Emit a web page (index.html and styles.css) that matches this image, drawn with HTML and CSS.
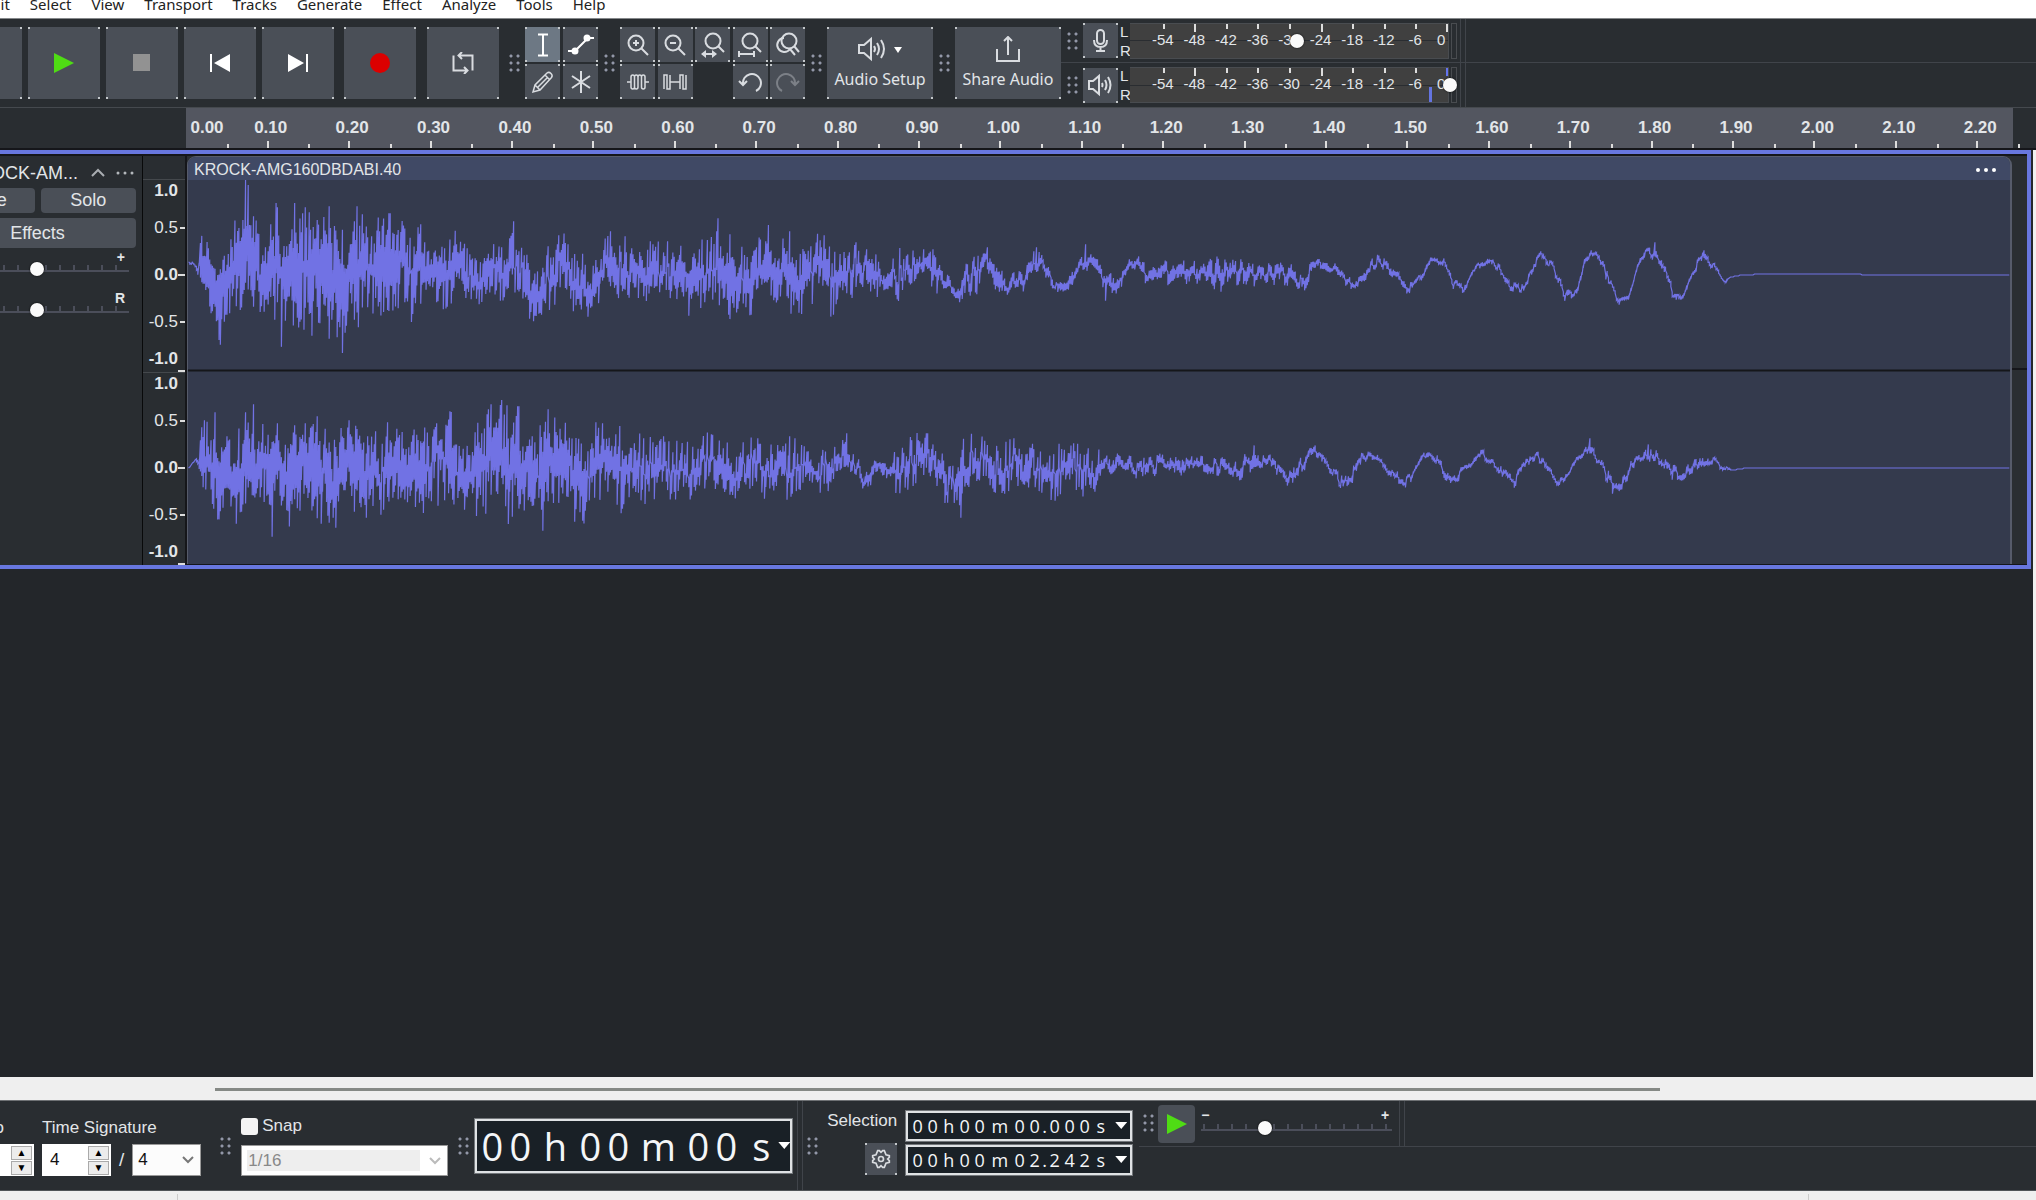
FILE: index.html
```html
<!DOCTYPE html>
<html lang="en">
<head>
<meta charset="utf-8">
<title>Audio editor</title>
<link rel="stylesheet" href="styles.css">
</head>
<body>
<div class="app">
  <nav class="menubar">
    <a href="#">Edit</a><a href="#">Select</a><a href="#">View</a><a href="#">Transport</a><a href="#">Tracks</a><a href="#">Generate</a><a href="#">Effect</a><a href="#">Analyze</a><a href="#">Tools</a><a href="#">Help</a>
  </nav>

  <header class="toolbar">
    <div class="transport">
      <button class="tile big" aria-label="Pause"></button>
      <button class="tile big" aria-label="Play"><svg width="20" height="20"><path d="M0 0 20 10 0 20z" fill="#4fdc14"/></svg></button>
      <button class="tile big" aria-label="Stop"><svg width="18" height="18"><path d="M0 0h17v17H0z" fill="#929292"/></svg></button>
      <button class="tile big" aria-label="Skip to start"><svg width="20" height="18"><path d="M0 0h2v18H0zM20 0v18L4 9z" fill="#fff"/></svg></button>
      <button class="tile big" aria-label="Skip to end"><svg width="20" height="18"><path d="M18 0h2v18h-2zM0 0v18l16-9z" fill="#fff"/></svg></button>
    </div>
    <button class="tile big spaced" aria-label="Record"><svg width="20" height="20"><circle cx="10" cy="10" r="10" fill="#dc0000"/></svg></button>
    <button class="tile big spaced" aria-label="Loop"><svg width="22" height="22" class="line"><path d="M1.500 3.500V18.500H15M12 15l3.500 3.500L12 22M20.500 18.500V3.500H7M10 0 6.500 3.500 10 7"/></svg></button>
    <i class="grip wide"></i>
    <div class="grid tools">
      <button class="tile selected" aria-label="Selection tool"><svg width="24" height="24" class="bright"><path d="M7 1.500h10M7 22.500h10M12 1.500v21"/></svg></button>
      <button class="tile" aria-label="Envelope tool"><svg width="28" height="24" class="bright"><path d="M1 18h8M19 5h8M8 18 21 5"/><circle cx="8" cy="18" r="2.500" fill="#fff"/><circle cx="20" cy="5" r="2.500" fill="#fff"/></svg></button>
      <button class="tile" aria-label="Draw tool"><svg width="24" height="24" class="line thin"><path d="M2 22l2-7L16 3q2-1.500 4 .5t.5 4L9 20zM14 5l5 5M4 15l5 5M7 17 17 7"/></svg></button>
      <button class="tile" aria-label="Multi-tool"><svg width="24" height="24" class="line"><path d="M12 1v22M3 6l18 12M3 18 21 6"/></svg></button>
    </div>
    <i class="grip"></i>
    <div class="grid edit">
      <button class="tile" aria-label="Zoom in"><svg width="24" height="24" class="line"><circle cx="10" cy="10" r="7.500"/><path d="M15.500 15.500 22 22M7 10h6M10 7v6"/></svg></button>
      <button class="tile" aria-label="Zoom out"><svg width="24" height="24" class="line"><circle cx="10" cy="10" r="7.500"/><path d="M15.500 15.500 22 22M7 10h6"/></svg></button>
      <button class="tile" aria-label="Fit selection"><svg width="26" height="26" class="line"><circle cx="13" cy="9" r="7.500"/><path d="M18 14l6 6M2 22h14"/><path d="M1 22l5-4v8zM17 22l-5-4v8z" fill="#d9dce0" stroke="none"/></svg></button>
      <button class="tile" aria-label="Fit project"><svg width="26" height="26" class="line"><circle cx="13" cy="9" r="7.500"/><path d="M18 14l6 6M2 22h15M2 19v6M17 19v6"/></svg></button>
      <button class="tile" aria-label="Zoom toggle"><svg width="26" height="26" class="line"><circle cx="14" cy="9" r="7.500"/><path d="M19 14l5 6M9 6a7 7 0 1 0 6 11M15 17l5 6"/></svg></button>
      <button class="tile" aria-label="Trim"><svg width="24" height="20" class="line thin"><path d="M1 10h4M19 10h4M5 5v10M5 5q0-2 1.750-2T8.500 5v10q0 2 1.750 2T12 15V5q0-2 1.750-2T15.500 5v10q0 2 1.750 2T19 15V5M5 15q0 2 1.750 2T8.500 15M12 5q0-2-1.750-2T8.500 5M15.500 5q0-2 1.750-2T19 5"/></svg></button>
      <button class="tile" aria-label="Silence"><svg width="24" height="20" class="line thin"><path d="M1 17V3h3v14h3V3M7 10h10M17 17V3h3v14h3V3"/></svg></button>
      <span></span>
      <button class="tile" aria-label="Undo"><svg width="24" height="24" class="line"><path d="M5 14A9 9 0 1 1 18 21M1 11l4 4 4-4"/></svg></button>
      <button class="tile dim" aria-label="Redo"><svg width="24" height="24" class="line"><path d="M19 14A9 9 0 1 0 6 21M23 11l-4 4-4-4"/></svg></button>
    </div>
    <i class="grip"></i>
    <button class="tile labelled"><svg width="44" height="26" class="line"><path d="M1 9h5l7-6v20l-7-6H1zM16 10q2 3 0 6M19 7q4 6 0 12M23 4q6 9 0 18"/><path d="M36 11h8l-4 6z" fill="#fff" stroke="none"/></svg><span>Audio Setup</span></button>
    <i class="grip"></i>
    <button class="tile labelled"><svg width="26" height="26" class="line"><path d="M2 13v12h22V13M13 19V1M9 5l4-4 4 4"/></svg><span>Share Audio</span></button>

    <div class="meters">
      <div class="meter-row">
        <i class="grip"></i>
        <button class="tile" aria-label="Record meter"><svg width="20" height="24" class="line"><rect x="6" y="1" width="7" height="14" rx="3.500"/><path d="M3 11q0 7 6.500 7T16 11M9.500 18v4M5 22h9"/></svg></button>
        <div class="lr"><span>L</span><span>R</span></div>
        <div class="meter">
          <div class="scale"><span>-54</span><span class="tall">-48</span><span>-42</span><span>-36</span><span>-30</span><span class="tall">-24</span><span>-18</span><span>-12</span><span>-6</span><span class="last tall">0</span></div>
          <i class="clip-led"></i>
          <input type="range" aria-label="Recording volume" min="0" max="100" value="51">
        </div>
        <i class="edge"></i>
      </div>
      <div class="meter-row">
        <i class="grip"></i>
        <button class="tile" aria-label="Playback meter"><svg width="25" height="24" class="line"><path d="M1 8h4l6-5v18l-6-5H1zM14 10q1 2 0 4M17 7q3 5 0 10M20 4q5 8 0 16"/></svg></button>
        <div class="lr"><span>L</span><span>R</span></div>
        <div class="meter playing">
          <div class="scale"><span>-54</span><span class="tall">-48</span><span>-42</span><span>-36</span><span>-30</span><span class="tall">-24</span><span>-18</span><span>-12</span><span>-6</span><span class="last tall">0</span></div>
          <i class="clip-led"></i>
          <input type="range" aria-label="Playback volume" min="0" max="100" value="100">
        </div>
        <i class="edge"></i>
      </div>
    </div>
  </header>

  <div class="timeline">
    <div class="times">
      <span class="first">0.00</span><span>0.10</span><span>0.20</span><span>0.30</span><span>0.40</span><span>0.50</span><span>0.60</span><span>0.70</span><span>0.80</span><span>0.90</span><span>1.00</span><span>1.10</span><span>1.20</span><span>1.30</span><span>1.40</span><span>1.50</span><span>1.60</span><span>1.70</span><span>1.80</span><span>1.90</span><span>2.00</span><span>2.10</span><span>2.20</span>
    </div>
  </div>

  <main class="project">
    <section class="track">
      <div class="panel">
        <div class="panel-inner">
          <div class="title"><span>KROCK-AM...</span>
            <button class="bare" aria-label="Collapse"><svg width="14" height="10" class="line soft"><path d="M1 8l6-6 6 6"/></svg></button>
            <button class="bare" aria-label="Track menu"><svg width="18" height="4" fill="#b4b8bc"><circle cx="2" cy="2" r="1.500"/><circle cx="9" cy="2" r="1.500"/><circle cx="16" cy="2" r="1.500"/></svg></button>
          </div>
          <div class="pair"><button class="pill">Mute</button><button class="pill">Solo</button></div>
          <button class="pill effects">Effects</button>
          <label class="knob"><span>+</span><input type="range" class="slider" aria-label="Gain" value="50"></label>
          <label class="knob"><span>R</span><input type="range" class="slider" aria-label="Pan" value="50"></label>
        </div>
      </div>
      <div class="levels">
        <div class="level-set"><b>1.0</b><span>0.5</span><b class="zero">0.0</b><span>-0.5</span><b class="low">-1.0</b></div>
        <div class="level-set"><b>1.0</b><span>0.5</span><b class="zero">0.0</b><span>-0.5</span><b class="low">-1.0</b></div>
      </div>
      <div class="clip">
        <div class="clip-head"><span>KROCK-AMG160DBDABI.40</span>
          <button class="bare" aria-label="Clip menu"><svg width="22" height="6" fill="#fff"><circle cx="3" cy="3" r="2"/><circle cx="11" cy="3" r="2"/><circle cx="19" cy="3" r="2"/></svg></button>
        </div>
        <svg class="wave" viewBox="187 181 1826 382" preserveAspectRatio="none">
          <path id="left" class="samples"/>
          <path id="right" class="samples"/>
          <path class="divider" d="M187 370.500H2013"/>
        </svg>
      </div>
    </section>
  </main>

  <div class="hscroll"><i></i></div>

  <footer class="bottom">
    <div class="tempo field">
      <label for="tempo">Tempo</label>
      <div class="spin"><input id="tempo" type="text" value="99."><span class="steps"><button aria-label="Tempo up">▲</button><button aria-label="Tempo down">▼</button></span></div>
    </div>
    <div class="signature field">
      <label for="upper">Time Signature</label>
      <div class="sig">
        <div class="spin"><input id="upper" type="text" value="4"><span class="steps"><button aria-label="Beats up">▲</button><button aria-label="Beats down">▼</button></span></div>
        <span>/</span>
        <select class="lower" aria-label="Beat unit"><option>4</option></select>
      </div>
    </div>
    <i class="grip"></i>
    <div class="snap field">
      <label><input type="checkbox">Snap</label>
      <select class="snap-to" aria-label="Snap to" disabled><option>1/16</option></select>
    </div>
    <i class="grip"></i>
    <div class="clock main-clock"><span>0</span><span>0</span><em>h</em><span>0</span><span>0</span><em class="m">m</em><span>0</span><span>0</span><em>s</em><button class="caret" aria-label="Time format"></button></div>
    <i class="edge"></i>
    <i class="grip"></i>
    <div class="selection">
      <div class="sel-side"><span>Selection</span>
        <button class="tile gear" aria-label="Selection options"><svg width="20" height="20" viewBox="0 0 24 24" class="line"><circle cx="12" cy="12" r="3"/><path d="M8 2h2l2 2 2-2h2l2 5 4 1v2l-2 2 2 2v2l-4 1-2 5h-2l-2-2-2 2H8l-2-5-4-1v-2l2-2-2-2V8l4-1z"/></svg></button>
      </div>
      <div class="sel-times">
        <div class="clock"><span>0</span><span>0</span><em>h</em><span>0</span><span>0</span><em class="m">m</em><span>0</span><span>0</span><i>.</i><span>0</span><span>0</span><span>0</span><em>s</em><button class="caret" aria-label="Start format"></button></div>
        <div class="clock"><span>0</span><span>0</span><em>h</em><span>0</span><span>0</span><em class="m">m</em><span>0</span><span>2</span><i>.</i><span>2</span><span>4</span><span>2</span><em>s</em><button class="caret" aria-label="End format"></button></div>
      </div>
    </div>
    <div class="speed">
      <i class="grip"></i>
      <button class="play" aria-label="Play at speed"><svg width="20" height="20"><path d="M0 0 20 10 0 20z" fill="#4fdc14"/></svg></button>
      <label class="rate"><span class="ends"><b>−</b><b>+</b></span><input type="range" class="slider" aria-label="Playback speed" min="0" max="100" value="32"></label>
      <i class="edge"></i>
    </div>
  </footer>
  <div class="status"><i></i><i></i></div>
</div>
<script src="wave.js"></script>
</body>
</html>
```
FILE: styles.css
```css
* { box-sizing: border-box; }
body { margin: 0; font-family: "Liberation Sans", Arial, sans-serif; font-size: 17px; color: #e2e5e8; background: #23262a; }
button, input, select { font: inherit; color: inherit; margin: 0; }
button { border: 0; padding: 0; background: none; display: flex; align-items: center; justify-content: center; }
svg { display: block; flex: none; }
.line { fill: none; stroke: #d9dce0; stroke-width: 2; }
.thin { stroke-width: 1.5; }
.bright { fill: none; stroke: #fff; stroke-width: 2; }
.soft { stroke: #a9adb1; }
.app { display: flex; flex-direction: column; height: 100vh; overflow: hidden; }

.menubar { flex: none; display: flex; gap: 20px; height: 18px; margin-left: -17px; overflow: hidden; background: #fff; }
.menubar a { margin-top: -7px; font: 15px/22px "Noto Sans", sans-serif; color: #222; text-decoration: none; }

.toolbar { flex: none; display: flex; align-items: center; height: 90px; background: #292d31; border-top: 1px solid #85888b; border-bottom: 1px solid #45494e; }
.transport { display: flex; gap: 6px; margin-left: -50px; }
.tile {
  width: 35px; height: 35px; flex: none;
  background:
    linear-gradient(#c4c8cb, #c4c8cb) 0 0 / 2px 2px no-repeat,
    linear-gradient(#c4c8cb, #c4c8cb) 100% 0 / 2px 2px no-repeat,
    linear-gradient(#c4c8cb, #c4c8cb) 0 100% / 2px 2px no-repeat,
    linear-gradient(#c4c8cb, #c4c8cb) 100% 100% / 2px 2px no-repeat,
    #4a4f57;
}
.big { width: 72px; height: 72px; }
.spaced { margin-left: 10px; }
.spaced + .spaced { margin-left: 11px; }
.selected { background-color: #6d7884; }
.dim svg { opacity: .35; }
.grip { flex: none; width: 11px; height: 18px; margin: 0 5px 0 6px; background: radial-gradient(circle at 2px 2px, #9297a8 1px, transparent 2px) 0 0 / 7px 7px; }
.grip.wide { margin-left: 10px; }
.grid { display: grid; row-gap: 2px; justify-content: space-between; }
.tools { grid-template-columns: 35px 35px; width: 73px; }
.edit { grid-template-columns: repeat(5, 35px); width: 185px; }
.labelled { width: 106px; height: 72px; flex-direction: column; gap: 6px; font: 16px/22px "Noto Sans", sans-serif; white-space: nowrap; }
.edge { flex: none; align-self: stretch; width: 6px; border: solid #40444a; border-width: 0 1px; }

.meters { flex: 1; align-self: stretch; display: grid; grid-template-rows: 1fr 1fr; }
.meter-row { display: flex; align-items: center; }
.meter-row:first-child { border-bottom: 1px solid #40444a; }
.lr { width: 12px; display: flex; flex-direction: column; padding-left: 2px; font-size: 15px; line-height: 19px; }
.meter { position: relative; display: flex; gap: 2px; height: 36px; margin-right: 3px; }
.scale { display: flex; width: 319px; padding-left: 17px; font-size: 15px; line-height: 32px; background: linear-gradient(#2a2d31, #2a2d31) 0 50% / 100% 1px no-repeat #404040; border: 1px solid #494c50; border-left: 0; }
.scale span { position: relative; flex: 1; text-align: center; }
.scale span::before { content: ""; position: absolute; left: 50%; top: 0; width: 2px; height: 5px; background: #ddd; }
.scale .tall::before { height: 8px; }
.scale .last { flex: 0 0 17px; text-align: left; padding-left: 6px; }
.scale .last::before { left: auto; right: 0; }
.playing .last::before { background: #6474f0; }
.playing::after { content: ""; position: absolute; left: 299px; bottom: 1px; width: 3px; height: 15px; background: #6474e0; }
.clip-led { width: 6px; border: 1px solid #494c50; }
input[type=range] { appearance: none; background: none; height: 14px; }
input[type=range]::-webkit-slider-thumb { appearance: none; width: 14px; height: 14px; border-radius: 50%; background: #fafafa; box-shadow: 0 0 2px #000; }
.meter input { position: absolute; left: 0; top: 11px; width: 100%; }

.timeline { flex: none; height: 42px; padding-left: 186px; background: #292d31; border-bottom: 2px solid #15161a; }
.times { display: flex; height: 100%; padding-right: 17px; background: linear-gradient(#535660, #535660) 0 0 / calc(100% - 23px) 100% no-repeat; font-weight: bold; line-height: 39px; }
.times span { position: relative; flex: 1 0 0; text-align: center; padding-left: 4px; }
.times .first { flex: 0 0 42px; padding: 0; }
.times span::before, .times span::after { content: ""; position: absolute; bottom: 0; right: -1px; width: 2px; height: 4px; background: #ddd; }
.times span::before { right: 50%; height: 7px; }
.times .first::before { display: none; }

.project { flex: 1; min-height: 0; padding-right: 5px; background: linear-gradient(#f0f0f0, #f0f0f0) 100% 0 / 3px 100% no-repeat #23262a; }
.track { display: flex; height: 419px; border: 4px solid #6877df; border-left: 0; padding-right: 15px; background: linear-gradient(#15161a, #15161a) 0 0 / 100% 2px no-repeat, linear-gradient(#15161a, #15161a) 0 100% / 100% 1px no-repeat, linear-gradient(#15161a, #15161a) 100% 214px / 100% 2px no-repeat, #2a2e32; padding-top: 2px; }
.panel { flex: none; width: 143px; display: flex; justify-content: flex-end; overflow: hidden; background: #292d31; border-right: 1px solid #08090a; }
.panel-inner { flex: none; width: 203px; padding: 6px 6px 0 0; }
.title { display: flex; justify-content: flex-end; align-items: center; gap: 11px; height: 22px; padding-right: 2px; font-size: 18px; }
.title span { margin-right: 2px; }
.pair { display: flex; gap: 6px; margin-top: 4px; }
.pill { flex: 1; height: 25px; border-radius: 4px; background: #4a4f57; font-size: 18px; }
.effects { width: 100%; height: 30px; margin: 5px 0 4px; }
.knob { display: block; padding: 0 7px 0 6px; height: 41px; }
.knob span { display: block; text-align: right; font-weight: bold; font-size: 14px; line-height: 10px; padding-right: 4px; }
.slider { display: block; width: 100%; }
.slider::-webkit-slider-runnable-track { height: 14px; background: linear-gradient(#4b4e5a, #4b4e5a) 0 8px / 100% 2px no-repeat, repeating-linear-gradient(90deg, #4b4e5a 0 2px, transparent 2px 14px) 2px 3px / 100% 5px no-repeat; }

.levels { flex: none; width: 44px; display: flex; flex-direction: column; padding-top: 23px; background: #292d31; border-right: 2px solid #15161a; line-height: 18px; }
.level-set { flex: 1; display: grid; grid-template-rows: minmax(0, 22fr) minmax(0, 52fr) minmax(0, 40fr) minmax(0, 54fr) minmax(0, 22fr); border-top: 1px solid #44484c; text-align: right; }
.level-set > * { position: relative; display: flex; align-items: center; justify-content: flex-end; padding-right: 7px; }
.level-set > :not(:first-child)::after { content: ""; position: absolute; right: 0; top: 50%; width: 5px; height: 2px; margin-top: -1px; background: #ddd; }
.level-set .zero::after { width: 7px; }
.level-set .low::after { top: auto; bottom: 0; width: 7px; }
.level-set .low { padding-bottom: 4px; }

.clip { flex: 1; min-width: 0; display: flex; flex-direction: column; overflow: hidden; border: solid #565b6a; border-width: 1px 2px 0 1px; border-radius: 9px 9px 0 0; background: #343a4d; margin-bottom: 1px; }
.clip-head { flex: none; display: flex; align-items: center; justify-content: space-between; height: 23px; padding: 2px 13px 0 6px; background: #404965; font-size: 16px; }
.wave { flex: 1; width: 100%; min-height: 0; }
.samples { fill: none; stroke: #7172e4; stroke-width: 1.2; }
.divider { stroke: #15161a; stroke-width: 2; }

.hscroll { flex: none; height: 24px; padding: 11px 376px 0 215px; background: #efefef; border-bottom: 1px solid #6e7174; }
.hscroll i { display: block; height: 3px; background: #858985; }

.bottom { flex: none; display: flex; align-items: center; height: 90px; background: #292d31; border-bottom: 1px solid #505458; }
.field { display: flex; flex-direction: column; gap: 6px; margin-top: 3px; line-height: 20px; white-space: nowrap; }
.tempo { width: 34px; align-items: flex-end; overflow: hidden; flex: none; }
.tempo label { padding-right: 30px; }
.signature { margin: 3px 13px 0 8px; }
.sig { display: flex; align-items: center; gap: 8px; font-size: 19px; }
.spin { display: flex; align-items: center; width: 69px; height: 32px; padding: 1px; background: #fff; font-size: 17px; flex: none; }
.spin input { width: 45px; height: 28px; padding: 0 0 0 7px; border: 0; background: #fff; color: #111; }
.tempo .spin input { padding-left: 4px; }
.steps { display: grid; gap: 1px; width: 21px; }
.steps button { height: 14px; font-size: 10px; line-height: 8px; background: #ececec; border: 1px solid #aaa; color: #000; }
select { appearance: none; height: 32px; border: 1px solid #999; border-radius: 0; padding: 0 5px; color: #111; opacity: 1; background: url("data:image/svg+xml,%3Csvg xmlns='http://www.w3.org/2000/svg' width='12' height='8'%3E%3Cpath d='M1 1l5 5 5-5' fill='none' stroke='%23777' stroke-width='2'/%3E%3C/svg%3E") right 6px center no-repeat #fcfcfc; }
.lower { width: 69px; font-size: 17px; }
.snap { gap: 9px; margin: 1px 0 0 5px; }
.snap label { display: flex; align-items: center; gap: 4px; }
.snap input { appearance: none; width: 17px; height: 17px; border-radius: 3px; background: #f4f4f4; }
.snap-to { width: 207px; height: 31px; padding: 0 6px; color: #888; background-image: url("data:image/svg+xml,%3Csvg xmlns='http://www.w3.org/2000/svg' width='12' height='8'%3E%3Cpath d='M1 1l5 5 5-5' fill='none' stroke='%23bbb' stroke-width='2'/%3E%3C/svg%3E"), linear-gradient(#eee, #eee); background-size: auto, 173px 21px; background-position: right 6px center, 5px 4px; background-repeat: no-repeat; background-color: #fff; }
.bottom .snap + .grip { margin-left: 10px; }

.clock { display: flex; align-items: center; width: 228px; height: 32px; padding-left: 2px; background: #192026; border: 3px solid #dfe2e4; outline: 1px solid #73777b; outline-offset: -1px; color: #f4f6f8; font: 18px/24px "Open Sans", "Noto Sans", sans-serif; }
.clock span { width: 15px; text-align: center; }
.clock em { width: 17px; text-align: center; font-style: normal; }
.clock .m { width: 25px; }
.clock i { width: 5px; text-align: center; font-style: normal; }
.caret { width: 12px; height: 7px; margin-left: auto; margin-right: 3px; background: #fff; clip-path: polygon(0 0, 100% 0, 50% 100%); }
.main-clock { flex: none; width: 319px; height: 56px; padding-left: 1px; margin-right: 4px; font-size: 38px; line-height: 48px; }
.main-clock span { width: 28px; }
.main-clock em { width: 42px; }
.main-clock .m { width: 52px; }
.main-clock .caret { margin: 0; margin-left: -4px; }
.edge + .grip { margin-left: 4px; }
.selection { display: flex; align-items: center; gap: 8px; margin: 0 0 6px 4px; }
.sel-side { display: flex; flex-direction: column; align-items: flex-end; gap: 12px; line-height: 20px; }
.gear { width: 32px; height: 32px; }
.sel-times { display: grid; gap: 2px; }
.speed { flex: 1; align-self: flex-start; display: flex; align-items: center; height: 46px; margin-left: 6px; border-bottom: 1px solid #40444a; }
.speed .grip { margin: 0 4px 2px; }
.play { flex: none; width: 37px; height: 38px; border-radius: 4px; background: #4a4f57; }
.rate { width: 191px; margin: 0 7px 4px 6px; }
.ends { display: flex; justify-content: space-between; padding-right: 3px; font-size: 14px; line-height: 12px; }

.status { flex: none; height: 9px; display: flex; justify-content: space-between; padding: 3px 227px 0 177px; background: #efefef; }
.status i { width: 1px; background: #ccc; }
```
FILE: wave.js
```js
// Envelope key points per channel: x, highest peak, lowest trough.
const channels = {
  left: [187,262,264,194,263,267,198,262,280,200,238,290,205,247,298,210,243,318,216,258,330,219,262,342,224,256,334,230,246,312,240,215,302,244,205,300,250,222,312,256,230,300,262,235,318,268,224,322,275,215,320,280,235,324,286,234,318,290,226,330,295,216,310,300,215,325,306,218,330,312,221,334,320,220,318,328,214,328,332,218,334,336,235,332,342,238,336,348,240,315,355,216,318,362,215,310,370,240,318,378,225,316,388,222,320,397,224,315,404,225,300,412,240,312,420,230,298,430,245,295,440,250,307,450,240,300,460,243,300,470,252,298,480,262,310,490,258,297,500,245,290,512,242,292,525,250,305,535,270,322,543,262,317,550,255,300,558,238,285,568,245,290,578,262,310,590,275,314,600,258,300,608,240,285,620,250,288,630,262,297,645,255,300,655,250,295,665,255,290,678,248,300,690,262,312,700,252,300,710,245,290,717,240,290,728,242,308,738,252,312,750,252,305,760,240,292,770,238,295,780,252,290,790,250,308,800,250,310,810,248,290,825,244,290,832,262,305,845,262,295,857,252,280,870,258,290,885,268,292,900,262,292,915,258,285,925,252,275,935,254,285,945,270,290,955,280,300,963,276,303,975,258,288,988,248,270,998,262,290,1010,276,300,1017,270,290,1025,268,294,1030,252,275,1042,252,274,1050,266,286,1058,280,295,1070,272,292,1080,262,280,1086,252,272,1097,258,276,1106,272,298,1118,272,295,1128,262,277,1140,258,275,1150,266,284,1160,265,288,1172,260,282,1185,262,288,1200,260,285,1215,260,288,1230,262,288,1250,260,286,1265,262,285,1280,260,284,1290,265,289,1305,275,291,1313,265,280,1325,255,267,1335,260,274,1345,276,288,1355,282,293,1365,268,281,1380,254,264,1392,264,276,1405,282,292,1415,284,292,1425,270,278,1434,254,262,1446,261,270,1455,280,288,1468,284,293,1478,265,271,1492,256,263,1504,270,278,1512,282,290,1526,287,293,1533,268,275,1544,250,258,1555,264,272,1567,290,300,1579,287,295,1588,255,264,1597,248,254,1608,268,278,1620,297,303,1630,296,302,1640,264,270,1648,247,257,1657,246,258,1666,260,270,1675,290,300,1685,294,301,1695,268,275,1706,253,262,1717,264,272,1727,280,283,1734,277,278,1745,275,276,1768,274,275,1863,274,275,1864,275,276,2013,275,276],
  right: [187,468,470,195,458,460,198,452,475,201,432,488,208,432,492,214,425,508,218,437,518,228,445,505,235,440,515,245,425,510,253,422,500,262,430,502,271,440,510,277,434,490,287,440,518,293,428,515,300,430,502,310,425,510,317,424,514,325,440,510,335,440,522,342,440,505,348,425,492,355,425,515,361,435,518,370,435,510,380,450,500,387,428,500,396,430,492,405,438,502,415,432,510,423,432,510,432,432,490,442,422,490,450,420,505,460,440,508,470,450,500,477,430,510,485,418,505,491,415,490,500,415,490,507,410,512,513,415,516,520,428,504,530,440,512,537,440,508,543,425,514,548,415,492,555,424,492,563,424,496,570,432,505,577,440,518,583,450,516,590,450,492,597,432,500,603,430,490,610,434,488,622,440,500,632,440,485,640,445,495,650,450,488,663,445,485,672,450,490,685,455,490,695,450,488,705,440,480,712,440,472,720,450,490,727,450,497,735,460,490,742,445,484,750,445,480,758,445,480,768,450,494,778,450,484,790,450,488,800,450,482,806,446,476,817,458,483,830,450,482,838,446,470,846,442,470,855,455,475,865,468,490,875,460,480,885,458,476,895,455,482,905,450,484,915,448,480,925,442,470,937,445,475,945,466,503,953,466,495,961,455,506,967,448,480,973,440,472,985,443,472,995,452,486,1003,452,494,1010,448,480,1015,442,476,1025,446,482,1037,447,480,1043,460,488,1055,462,494,1063,450,480,1073,447,475,1085,452,484,1097,456,484,1108,453,475,1118,452,474,1130,456,478,1138,462,480,1150,458,475,1160,454,472,1175,458,480,1190,457,476,1200,456,472,1215,457,474,1225,458,476,1234,465,482,1245,456,475,1255,449,468,1270,455,466,1278,464,475,1290,470,485,1300,460,477,1310,448,462,1318,444,456,1325,450,462,1332,466,476,1343,476,489,1355,464,478,1365,449,460,1375,449,457,1385,460,468,1395,470,480,1408,476,486,1418,462,471,1430,449,457,1440,458,466,1450,470,482,1460,470,480,1470,462,469,1484,449,457,1495,458,465,1505,468,477,1518,474,487,1525,460,468,1540,452,460,1547,462,470,1560,478,485,1570,472,480,1580,455,462,1593,440,450,1602,458,466,1614,479,492,1625,477,488,1634,458,467,1645,455,465,1650,448,459,1657,450,462,1668,460,470,1676,465,478,1687,468,480,1697,460,474,1707,458,470,1715,456,464,1725,464,468,1735,469,471,1750,467,468,2013,467,468]
};

// Isolated peaks, keyed by x, as the y the column reaches.
const peaks = {
  left: [245,181,247,186,253,217,277,208,294,204,308,213,329,207,356,207,362,215,388,214,420,225,219,345,280,347,311,336,329,339,342,353,354,320,514,222,610,232,625,237,718,219,651,242,689,316,730,235,790,232,825,236,856,243,752,315,729,315,799,313,924,250,934,250,988,248,1037,248,1086,245,1106,301,1657,243,1706,251,1621,305],
  right: [214,412,245,412,253,404,277,423,294,425,317,416,348,420,387,422,450,411,271,536,335,527,329,522,491,404,507,405,518,406,548,409,596,422,602,423,543,530,575,521,583,520,622,508,664,436,711,434,790,436,847,433,961,517,927,433,1015,438,1056,500,1255,445,1592,438,1650,444,1614,493]
};

let seed = 7;
function random() {
  seed = (seed * 1103515245 + 12345) % 2147483648;
  return seed / 2147483648;
}

function trace(points, spikes) {
  let d = "", k = 0, drift = 0, hold = 0;
  for (let x = 187.5; x < 2013; x += 1.33) {
    while (points[k + 3] < x) k += 3;
    const t = (x - points[k]) / (points[k + 3] - points[k]);
    const hi = points[k + 1] + t * (points[k + 4] - points[k + 1]);
    const lo = points[k + 2] + t * (points[k + 5] - points[k + 2]);
    const half = (lo - hi) / 2;
    const calm = half < 1.2;
    // The band's centre jumps every few columns, which leaves notches and lone spikes.
    if (hold-- <= 0) {
      drift = (random() * 2 - 1) * Math.min(half * .9, half > 13 ? 15 : 6);
      hold = half > 13 ? 0 : Math.floor(random() * 3);
    }
    const mid = (hi + lo) / 2 + drift;
    const base = half > 13 ? .22 : .1;
    const reach = half > 13 ? .8 : .6;
    let top = mid - half * (base + reach * random());
    let bottom = mid + half * (base + reach * random());
    for (let i = 0; i < spikes.length; i += 2) {
      if (Math.abs(spikes[i] - x) < .67) {
        if (spikes[i + 1] < mid) top = spikes[i + 1]; else bottom = spikes[i + 1];
      }
    }
    if (calm) d += (d ? "L" : "M") + x.toFixed(2) + " " + Math.round(hi) + ".5";
    else d += (d ? "L" : "M") + x.toFixed(2) + " " + top.toFixed(1) + "V" + bottom.toFixed(1);
  }
  return d;
}

for (const name of Object.keys(channels)) {
  document.getElementById(name).setAttribute("d", trace(channels[name], peaks[name]));
}
```
